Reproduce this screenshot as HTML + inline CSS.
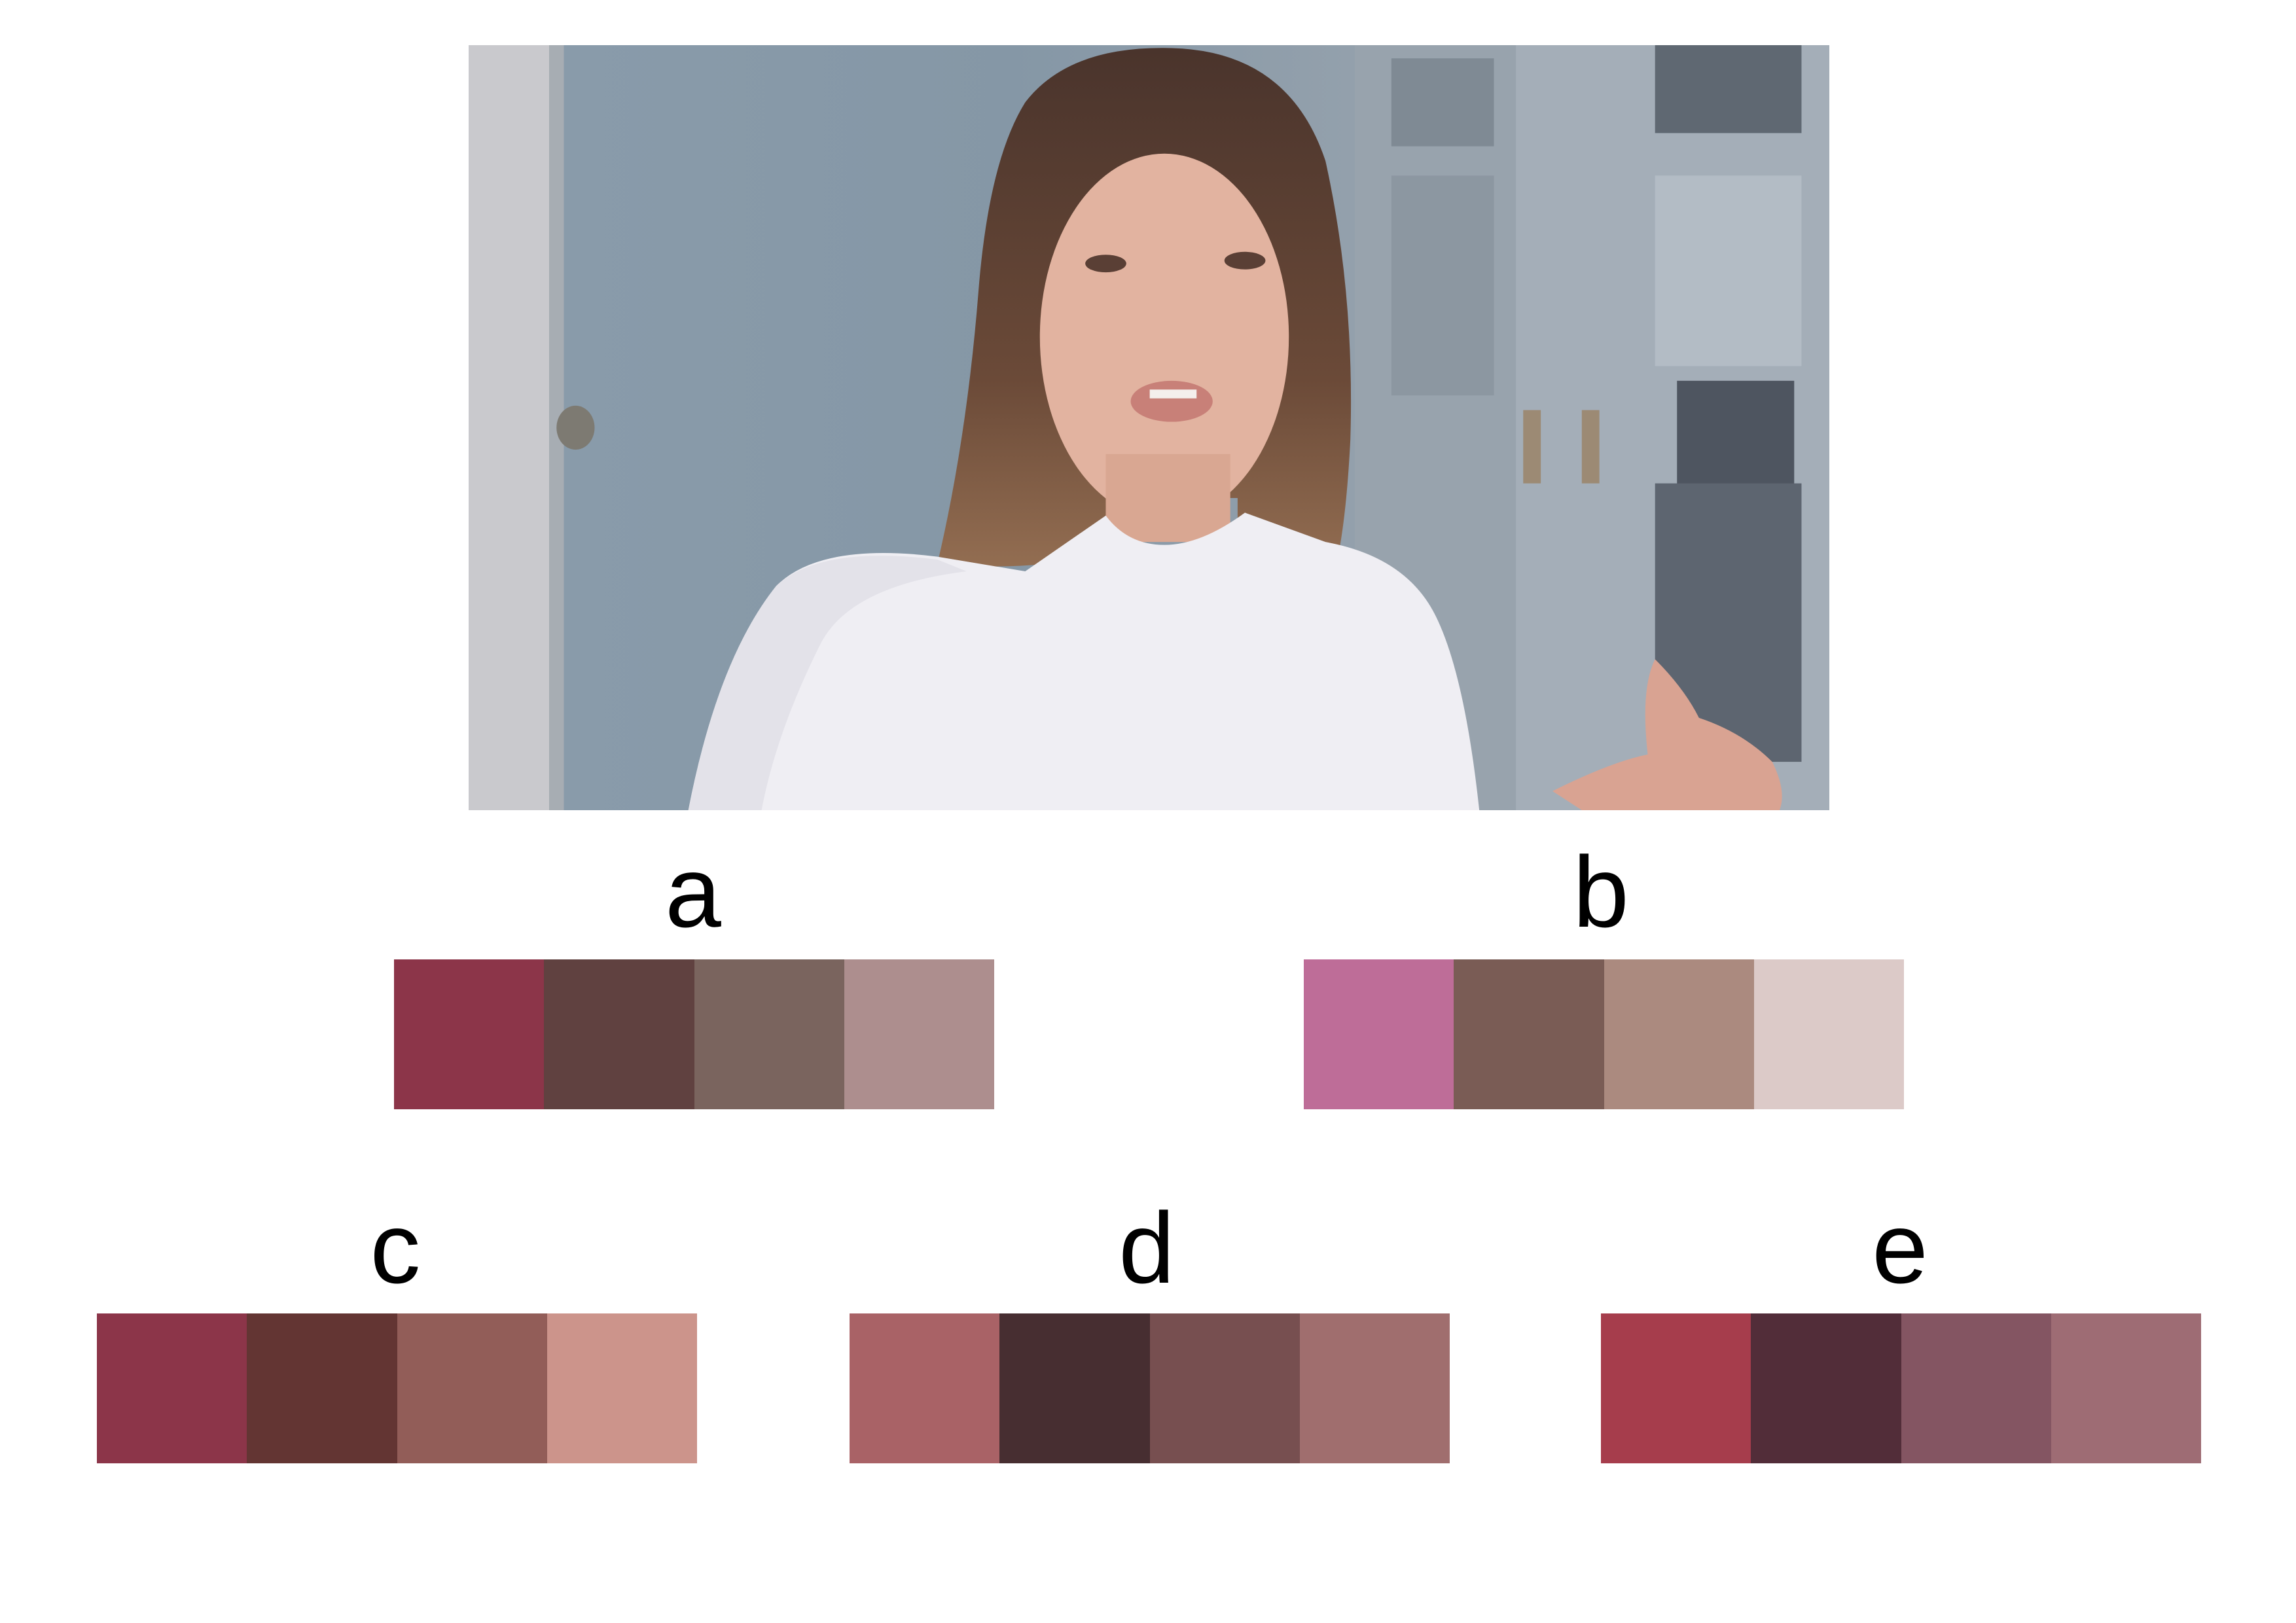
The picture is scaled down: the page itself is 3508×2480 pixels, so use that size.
<!DOCTYPE html>
<html><head><meta charset="utf-8"><style>
html,body{margin:0;padding:0;background:#fff;}
body{width:3508px;height:2480px;position:relative;overflow:hidden;font-family:"Liberation Sans",Arial,sans-serif;}
.ph{position:absolute;left:716px;top:69px;width:2079px;height:1169px;}
.lab{position:absolute;font-size:154px;line-height:1;color:#000;width:400px;text-align:center;}
.row{position:absolute;height:229px;width:917px;display:flex;}
.row div{flex:1;height:100%;}
</style></head><body>
<svg class="ph" viewBox="320 31 929 522" preserveAspectRatio="none">
<defs>
<linearGradient id="bg" x1="0" x2="1" y1="0" y2="0"><stop offset="0" stop-color="#8a9cab"/><stop offset="0.4" stop-color="#8597a6"/><stop offset="0.7" stop-color="#96a2ad"/><stop offset="1" stop-color="#8e98a3"/></linearGradient>
<linearGradient id="hair" x1="0" x2="0" y1="0" y2="1"><stop offset="0" stop-color="#4a342c"/><stop offset="0.6" stop-color="#6b4a38"/><stop offset="1" stop-color="#9a7456"/></linearGradient>
</defs>
<rect x="320" y="31" width="929" height="522" fill="url(#bg)"/>
<rect x="320" y="31" width="55" height="522" fill="#c9c9cd"/>
<rect x="375" y="31" width="10" height="522" fill="#a7adb3"/>
<rect x="1030" y="31" width="219" height="522" fill="#a4aeb8"/>
<rect x="925" y="31" width="110" height="522" fill="#98a3ad"/>
<rect x="950" y="40" width="70" height="60" fill="#7f8a94"/>
<rect x="950" y="120" width="70" height="150" fill="#8c97a1"/>
<rect x="1130" y="31" width="100" height="60" fill="#5f6872"/>
<rect x="1130" y="120" width="100" height="130" fill="#b3bcc5"/>
<rect x="1145" y="260" width="80" height="80" fill="#4e5560"/>
<rect x="1130" y="330" width="100" height="190" fill="#5d6570"/>
<rect x="1040" y="280" width="12" height="50" fill="#9c8a74"/>
<rect x="1080" y="280" width="12" height="50" fill="#9c8a74"/>
<ellipse cx="393" cy="292" rx="13" ry="15" fill="#7d7a72"/>
<path d="M700 70 Q730 31 800 33 Q880 35 905 110 Q925 200 922 300 Q918 380 905 410 L845 410 L845 340 L760 340 L745 380 Q700 390 640 385 Q660 300 668 200 Q675 110 700 70Z" fill="url(#hair)"/>
<ellipse cx="795" cy="230" rx="85" ry="125" fill="#e2b3a0"/>
<rect x="755" y="310" width="85" height="60" fill="#d9a792"/>
<path d="M700 390 L640 380 Q560 370 530 400 Q490 450 470 553 L1010 553 Q1000 460 980 420 Q960 380 905 370 L850 350 Q820 372 795 372 Q770 372 755 352 Z" fill="#efeef3"/>
<path d="M470 553 Q490 450 530 400 Q560 372 640 382 L660 390 Q580 400 560 440 Q530 500 520 553Z" fill="#e3e2e9"/>
<ellipse cx="755" cy="180" rx="14" ry="6" fill="#5a3f35"/>
<ellipse cx="850" cy="178" rx="14" ry="6" fill="#5a3f35"/>
<ellipse cx="800" cy="274" rx="28" ry="14" fill="#c88078"/>
<rect x="785" y="266" width="32" height="6" fill="#f4efec"/>
<path d="M1060 540 Q1100 520 1125 515 Q1120 470 1130 450 Q1150 470 1160 490 Q1190 500 1210 520 Q1220 540 1215 553 L1080 553Z" fill="#d9a392"/>
</svg>
<div class="lab" style="left:859px;top:1286px">a</div>
<div class="lab" style="left:2246px;top:1286px">b</div>
<div class="lab" style="left:404px;top:1830px">c</div>
<div class="lab" style="left:1552px;top:1830px">d</div>
<div class="lab" style="left:2703px;top:1830px">e</div>
<div class="row" style="left:602px;top:1466px"><div style="background:#8c3549"></div><div style="background:#604140"></div><div style="background:#7a645e"></div><div style="background:#ad8e8e"></div></div>
<div class="row" style="left:1992px;top:1466px"><div style="background:#be6d98"></div><div style="background:#7a5c55"></div><div style="background:#ab8a7f"></div><div style="background:#dccac8"></div></div>
<div class="row" style="left:148px;top:2007px"><div style="background:#8c3549"></div><div style="background:#633533"></div><div style="background:#925d58"></div><div style="background:#cc948b"></div></div>
<div class="row" style="left:1298px;top:2007px"><div style="background:#a96266"></div><div style="background:#472e31"></div><div style="background:#774f50"></div><div style="background:#a06e6e"></div></div>
<div class="row" style="left:2446px;top:2007px"><div style="background:#a63d4c"></div><div style="background:#522d39"></div><div style="background:#845562"></div><div style="background:#9e6c74"></div></div>
</body></html>
